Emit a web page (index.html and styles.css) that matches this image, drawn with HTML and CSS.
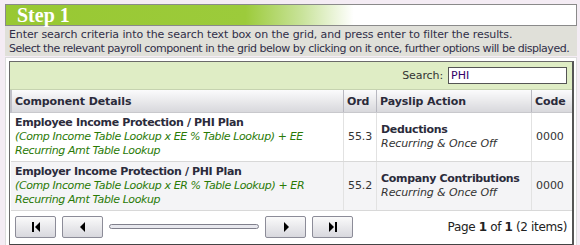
FILE: index.html
```html
<!DOCTYPE html>
<html>
<head>
    <title>Step 1</title>
    <link rel="stylesheet" href="styles.css">
</head>
<body>
    <div class="page">
        <div class="step-head">Step 1</div>
        <div class="instructions">
            <div class="line">Enter search criteria into the search text box on the grid, and press enter to filter the results.</div>
            <div class="line long">Select the relevant payroll component in the grid below by clicking on it once, further options will be displayed.</div>
        </div>
        <div class="panel">
            <div class="grid">
                <div class="toolbar">
                    <label for="search">Search:</label>
                    <input type="text" id="search" value="PHI">
                </div>
                <table class="rows">
                    <tr>
                        <th class="col-details">Component Details</th>
                        <th class="col-ord">Ord</th>
                        <th class="col-action">Payslip Action</th>
                        <th class="col-code">Code</th>
                    </tr>
                    <tr>
                        <td>
                            <div class="title">Employee Income Protection / PHI Plan</div>
                            <div class="formula">(Comp Income Table Lookup x EE % Table Lookup) + EE Recurring Amt Table Lookup</div>
                        </td>
                        <td>55.3</td>
                        <td>
                            <div class="title">Deductions</div>
                            <div class="sub">Recurring &amp; Once Off</div>
                        </td>
                        <td>0000</td>
                    </tr>
                    <tr class="alt">
                        <td>
                            <div class="title">Employer Income Protection / PHI Plan</div>
                            <div class="formula">(Comp Income Table Lookup x ER % Table Lookup) + ER Recurring Amt Table Lookup</div>
                        </td>
                        <td>55.2</td>
                        <td>
                            <div class="title">Company Contributions</div>
                            <div class="sub">Recurring &amp; Once Off</div>
                        </td>
                        <td>0000</td>
                    </tr>
                </table>
                <div class="pager">
                    <button class="pager-btn" title="First">
                        <svg width="12" height="10" viewBox="0 0 12 10"><rect x="2" y="0" width="2" height="10" fill="#000"/><polygon points="10,0 10,10 5,5" fill="#000"/></svg>
                    </button>
                    <button class="pager-btn" title="Previous">
                        <svg width="12" height="10" viewBox="0 0 12 10"><polygon points="8,0 8,10 3,5" fill="#000"/></svg>
                    </button>
                    <div class="slider"></div>
                    <button class="pager-btn" title="Next">
                        <svg width="12" height="10" viewBox="0 0 12 10"><polygon points="4,0 4,10 9,5" fill="#000"/></svg>
                    </button>
                    <button class="pager-btn" title="Last">
                        <svg width="12" height="10" viewBox="0 0 12 10"><polygon points="2,0 2,10 7,5" fill="#000"/><rect x="8" y="0" width="2" height="10" fill="#000"/></svg>
                    </button>
                    <div class="page-info">Page <b>1</b> of <b>1</b> (2 items)</div>
                </div>
            </div>
        </div>
    </div>
</body>
</html>
```

FILE: styles.css
```css
body {
    margin: 0;
    background-color: #f4ecf4;
    font-family: "DejaVu Sans", Verdana, sans-serif;
    font-size: 11px;
    letter-spacing: -0.1px;
    color: #333;
}
.page {
    padding: 4px 3px 0 5px;
}
.step-head {
    height: 20px;
    line-height: 21px;
    border: 1px solid #8a8a8a;
    background: linear-gradient(to right, #98c832 0%, #9ccb3b 42%, #c9e39b 52%, #ffffff 61%);
    color: #fff;
    font-family: "Liberation Serif", "Times New Roman", serif;
    font-weight: bold;
    font-size: 20px;
    letter-spacing: 0;
    padding-left: 11px;
}
.instructions {
    background-color: #e0e0d9;
    padding: 2px 4px 0 4px;
    line-height: 14px;
    color: #302f48;
}
.line {
    white-space: nowrap;
}
.line.long {
    letter-spacing: -0.48px;
}
.panel {
    margin-top: 1px;
    background-color: #fff;
    border: 1px solid #dcdcdc;
    padding: 3px 2px 2px 3px;
}
.grid {
    border: 1px solid #6a6a6a;
    border-bottom: 2px solid #444;
    border-right: 2px solid #555;
    background-color: #fff;
}
.toolbar {
    height: 27px;
    background-color: #dfedc5;
    display: flex;
    align-items: center;
    justify-content: flex-end;
    padding-right: 5px;
    border-bottom: 1px solid #c6d3b0;
}
.toolbar label {
    margin-right: 5px;
}
.toolbar input {
    width: 119px;
    height: 17px;
    box-sizing: border-box;
    border: 1px solid #555;
    padding: 0 2px;
    font-family: "DejaVu Sans", Verdana, sans-serif;
    font-size: 11px;
    color: #330066;
}
.rows {
    width: 100%;
    border-collapse: collapse;
    font-size: 11px;
}
.rows th {
    height: 22px;
    text-align: left;
    padding: 0 3px;
    background: linear-gradient(#fbfbfc, #d8d8dc);
    border-left: 1px solid #b8b8c0;
    border-bottom: 1px solid #c8c8cc;
    font-weight: bold;
    color: #2b2b3b;
}
.rows th:first-child {
    border-left: 2px solid #c0c0c8;
}
.col-details { width: 325px; }
.col-ord { width: 25px; }
.col-action { width: 148px; }
.rows td {
    height: 39px;
    padding: 3px 4px 3px 4px;
    border-left: 1px solid #e2e2e2;
    border-bottom: 1px solid #d8d8d8;
    line-height: 14px;
    vertical-align: middle;
}
.rows td:first-child {
    border-left: none;
    vertical-align: top;
}
.rows tr.alt td {
    background-color: #f4f4f6;
}
.title {
    font-weight: bold;
    letter-spacing: -0.35px;
    color: #2b2b3b;
}
.formula {
    font-style: italic;
    letter-spacing: -0.4px;
    color: #2a7a06;
}
.sub {
    font-style: italic;
}
.pager {
    display: flex;
    align-items: center;
    height: 31px;
    padding: 0 5px 2px 5px;
}
.pager-btn {
    width: 41px;
    height: 22px;
    margin-right: 6px;
    border: 1px solid #8c8c98;
    border-radius: 2px;
    background: linear-gradient(#fafafa, #d8d8de);
    display: flex;
    align-items: center;
    justify-content: center;
    padding: 0;
}
.slider {
    width: 148px;
    height: 3px;
    border: 1px solid #80808c;
    border-radius: 3px;
    background-color: #e8e8ee;
    margin-right: 6px;
}
.page-info {
    margin-left: auto;
    font-size: 12px;
    letter-spacing: -0.35px;
    color: #222;
}
```
